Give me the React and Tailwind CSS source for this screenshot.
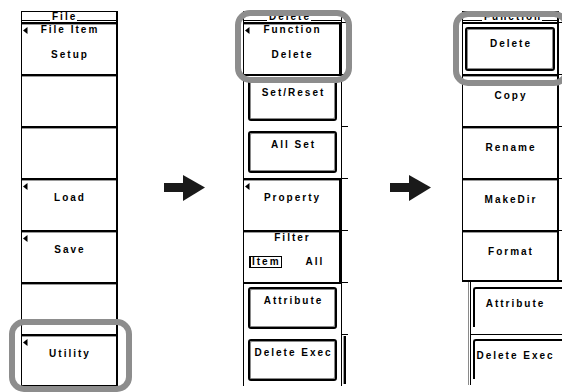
import React from "react";

const txt = "text-[10px] font-bold leading-[10px] tracking-[2px]";

function Tri() {
  return (
    <svg className="absolute left-[1px] top-[3px]" width="5" height="7" viewBox="0 0 5 7">
      <path d="M4.5 0V7L0 3.5Z" fill="#000" />
    </svg>
  );
}

function Title({ left, children }) {
  return (
    <div className="flex h-[11px] items-end border-t border-black">
      <div className={`mb-[1px] h-px bg-black ${left}`} />
      <span className={`${txt} pl-[2px]`}>{children}</span>
      <div className="mb-[1px] h-px flex-1 bg-black" />
    </div>
  );
}

function Flat({ tri, label, two, last, pt = "pt-[13px]", right = "" }) {
  return (
    <div
      className={`relative h-[52px] border-t-2 border-black shadow-[inset_0_1px_0_#9a9a9a] ${right} ${
        last ? "border-b" : ""
      }`}
    >
      {tri && <Tri />}
      {two ? (
        <>
          <div className={`${txt} pl-[2px] pt-[1px] text-center`}>{two[0]}</div>
          <div className={`${txt} mt-[15px] pl-[2px] text-center`}>{two[1]}</div>
        </>
      ) : (
        label && <div className={`${txt} pl-[2px] text-center ${pt}`}>{label}</div>
      )}
    </div>
  );
}

function Raised({ label, top }) {
  return (
    <div className={`h-[52px] px-[4px] ${top ? "border-t-2 border-black pt-[3px]" : "pt-[5px]"}`}>
      <div className="h-[42px] rounded-[3px] border-2 border-black pt-[7px] shadow-[inset_-1px_-1px_0_#8a8a8a,inset_1px_1px_0_#8a8a8a]">
        <div className={`${txt} pl-[2px] text-center`}>{label}</div>
      </div>
    </div>
  );
}

function Arrow() {
  return (
    <svg width="41" height="26" viewBox="0 0 41 26">
      <rect x="0" y="8" width="20" height="9" fill="#1a1a1a" />
      <path d="M19 0L41 12.5L19 26Z" fill="#1a1a1a" />
    </svg>
  );
}

function Ring({ cls }) {
  return (
    <div
      className={`pointer-events-none absolute rounded-[15px] border-[6px] border-[#8d8d8d] ${cls}`}
    />
  );
}

export default function App() {
  return (
    <div className="relative h-[392px] w-[562px] overflow-hidden bg-white text-black font-['Liberation_Sans',Arial,sans-serif]">
      <div className="flex items-start pl-[21px] pt-[11px]">
        {/* File menu */}
        <div className="flex w-[97px] shrink-0 flex-col border-l border-r-2 border-black">
          <Title left="w-[28px]">File</Title>
          <Flat tri two={["File Item", "Setup"]} />
          <Flat />
          <Flat />
          <Flat tri label="Load" />
          <Flat tri label="Save" />
          <Flat />
          <Flat tri label="Utility" last />
        </div>

        <div className="w-[125px] shrink-0 pl-[46px] pt-[164px]">
          <Arrow />
        </div>

        {/* Delete menu */}
        <div className="flex shrink-0">
          <div className="flex w-[99px] flex-col border-l border-r border-black">
            <Title left="w-[23px]">Delete</Title>
            <Flat tri two={["Function", "Delete"]} right="border-r-2" />
            <Raised label="Set/Reset" top />
            <Raised label="All Set" />
            <Flat tri label="Property" right="border-r-2" />
            <div className="h-[52px] border-t-2 border-r-2 border-black shadow-[inset_0_1px_0_#9a9a9a]">
              <div className={`${txt} pl-[2px] pt-[1px] text-center`}>Filter</div>
              <div className="mt-[13px] flex items-center pl-[5px]">
                <span className={`${txt} h-[12px] border border-l-2 border-black pl-[1px] tracking-[1.5px]`}>
                  Item
                </span>
                <span className={`${txt} ml-[24px]`}>All</span>
              </div>
            </div>
            <Raised label="Attribute" top />
            <Raised label="Delete Exec" />
          </div>
          <div className="flex w-[6px] flex-col">
            <div className="h-[11px]" />
            <div className="h-[52px] border-t border-black" />
            <div className="h-[52px] border-t border-black" />
            <div className="h-[52px] border-t border-black" />
            <div className="h-[52px] border-t border-black" />
            <div className="h-[52px] border-t border-black" />
            <div className="h-[52px] border-t border-black" />
            <div className="h-[52px] border-t border-black pt-px">
              <div className="ml-px h-[48px] w-[3px] border-r-2 border-black bg-[#9a9a9a]" />
            </div>
          </div>
        </div>

        <div className="w-[114px] shrink-0 pl-[42px] pt-[164px]">
          <Arrow />
        </div>

        {/* Function menu */}
        <div className="flex shrink-0 flex-col">
          <div className="flex">
            <div className="flex w-[97px] flex-col border-l border-r-2 border-black">
              <Title left="w-[19px]">Function</Title>
              <div className="h-[52px] border-t-2 border-black px-[2px] pt-[3px]">
                <div className="h-[44px] rounded-[3px] border-2 border-black pt-[10px] shadow-[inset_-1px_-1px_0_#8a8a8a,inset_1px_1px_0_#8a8a8a]">
                  <div className={`${txt} pl-[2px] text-center`}>Delete</div>
                </div>
              </div>
              <Flat label="Copy" pt="pt-[15px]" />
              <Flat label="Rename" pt="pt-[15px]" />
              <Flat label="MakeDir" pt="pt-[15px]" />
              <div className="h-[52px] border-y-2 border-black shadow-[inset_0_1px_0_#9a9a9a]">
                <div className={`${txt} pl-[2px] pt-[15px] text-center`}>Format</div>
              </div>
            </div>
            <div className="flex w-[4px] flex-col">
              <div className="h-[11px]" />
              <div className="h-[52px] border-t border-black" />
              <div className="h-[52px] border-t border-black" />
              <div className="h-[52px] border-t border-black" />
              <div className="h-[52px] border-t border-black" />
              <div className="h-[52px] border-t border-b-2 border-black" />
            </div>
          </div>
          <div className="ml-[6px] w-[100px] border-l border-[#8a8a8a] pl-px">
            <div className="border-l border-black">
              <div className="h-[52px] pl-[2px] pt-[5px]">
                <div className="h-[40px] rounded-tl-[3px] border-l-2 border-t-2 border-black pt-[10px]">
                  <div className={`${txt} pr-[12px] text-center`}>Attribute</div>
                </div>
              </div>
              <div className="h-[51px] border-t border-black pl-[2px] pt-[4px]">
                <div className="h-[40px] rounded-tl-[3px] border-l-2 border-t-2 border-black pt-[10px]">
                  <div className={`${txt} pr-[12px] text-center`}>Delete Exec</div>
                </div>
              </div>
            </div>
          </div>
        </div>
      </div>

      <Ring cls="left-[9px] top-[319px] h-[73px] w-[123px]" />
      <Ring cls="left-[235px] top-[10px] h-[73px] w-[117px]" />
      <Ring cls="left-[453px] top-[11px] h-[75px] w-[116px]" />
    </div>
  );
}
